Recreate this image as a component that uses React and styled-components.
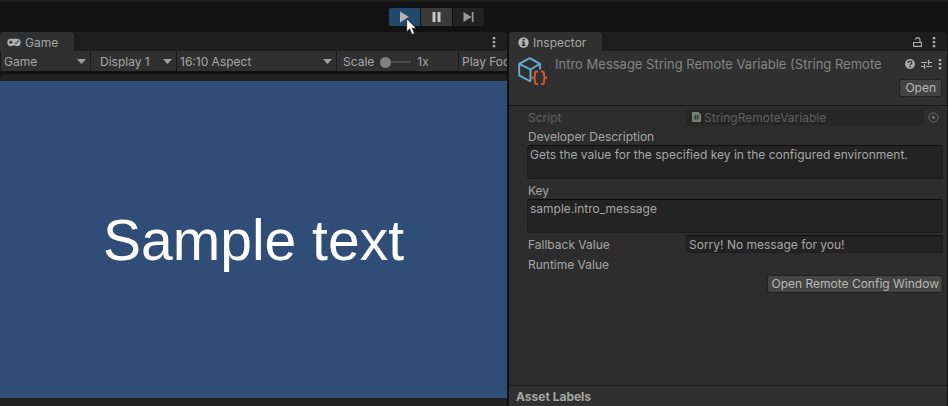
import React from "react";
import styled, { createGlobalStyle } from "styled-components";

const GlobalStyle = createGlobalStyle`
  *, *::before, *::after { box-sizing: border-box; }
  html, body, #root { height: 100%; }
  body {
    margin: 0;
    background: #121212;
    color: #a6a6a6;
    font-family: Inter, "Liberation Sans", sans-serif;
    font-size: 12px;
    line-height: 16px;
    overflow: hidden;
  }
  button, input, select, textarea { font: inherit; color: inherit; margin: 0; }
  h1, h2, p { margin: 0; font: inherit; }
  svg { display: block; flex: none; }
`;

const Editor = styled.div`
  display: flex;
  flex-direction: column;
  height: 100vh;
`;

const PlayBar = styled.header`
  display: flex;
  justify-content: center;
  align-items: center;
  height: 32px;
  flex: none;
  padding: 0 76px 0 0;
  border-top: 2px solid #1c1c1c;
`;

const PlayControls = styled.div`
  position: relative;
  display: flex;
  gap: 1px;
`;

const PlayButton = styled.button`
  display: grid;
  place-items: center;
  width: 31px;
  height: 18px;
  padding: 0;
  border: 0;
  background: ${(p) => p.$bg};
  color: ${(p) => p.$fg || "#b4b4b4"};
  &:first-child { border-radius: 2px 0 0 2px; }
  &:nth-child(3) { border-radius: 0 2px 2px 0; }
`;

const Pointer = styled.svg`
  position: absolute;
  left: 17px;
  top: 10px;
  pointer-events: none;
`;

const Panels = styled.main`
  flex: 1;
  min-height: 0;
  display: grid;
  grid-template-columns: minmax(0, 507fr) minmax(0, 438fr);
  gap: 2px;
  padding-right: 1px;
`;

const Panel = styled.section`
  display: flex;
  flex-direction: column;
  min-width: 0;
  overflow: hidden;
`;

const TabStrip = styled.div`
  display: flex;
  align-items: center;
  height: 19px;
  flex: none;
  gap: 10px;
  padding-right: 11px;
  background: #1e1e1e;
  border-radius: 3px 3px 0 0;
`;

const Tab = styled.h2`
  display: flex;
  align-items: center;
  gap: 4px;
  height: 19px;
  padding: 2px 16px 0 ${(p) => p.$start};
  margin-right: auto;
  border-radius: 3px 3px 0 0;
  background: #303030;
`;

const IconButton = styled.button`
  display: grid;
  place-items: center;
  padding: 0;
  border: 0;
  background: none;
`;

const Toolbar = styled.div`
  display: flex;
  height: 20px;
  flex: none;
  background: #303030;
  border-left: 1px solid #1a1a1a;
  overflow: hidden;
  white-space: nowrap;
`;

const DropDown = styled.label`
  position: relative;
  display: flex;
  align-items: center;
  flex: 0 0 ${(p) => p.$width};
  border-right: 1px solid #1a1a1a;
  select {
    appearance: none;
    width: 100%;
    height: 20px;
    padding: 2px 16px 0 ${(p) => p.$start || "3px"};
    border: 0;
    background: none;
  }
  svg {
    position: absolute;
    right: 4px;
    pointer-events: none;
  }
`;

const ScaleGroup = styled.label`
  display: flex;
  align-items: center;
  flex: 0 0 122px;
  gap: 6px;
  padding: 2px 0 0 6px;
  border-right: 1px solid #1a1a1a;
`;

const Slider = styled.input.attrs({ type: "range" })`
  appearance: none;
  width: 31px;
  height: 12px;
  background: linear-gradient(#4c4c4c, #4c4c4c) center / 100% 2px no-repeat;
  &::-webkit-slider-thumb {
    appearance: none;
    width: 11px;
    height: 11px;
    border-radius: 50%;
    background: #808080;
  }
`;

const ToolbarButton = styled.button`
  flex: none;
  padding: 2px 3px 0;
  border: 0;
  background: none;
`;

const GameFrame = styled.div`
  flex: 1;
  min-height: 0;
  display: flex;
  flex-direction: column;
  margin-top: 3px;
  padding: 7px 0 8px;
  background: #212121;
  border-radius: 4px 4px 0 0;
`;

const GameView = styled.div`
  flex: 1;
  display: grid;
  place-items: center;
  background: #304d78;
  color: #fff;
  font: 57px/68px "Liberation Sans", Arial, sans-serif;
`;

const AssetHeader = styled.div`
  display: grid;
  grid-template-columns: 30px minmax(0, 1fr) auto;
  gap: 6px 8px;
  align-content: start;
  height: 55px;
  flex: none;
  padding: 4px 5px 0 8px;
  background: #303030;
  border-bottom: 1px solid #171717;
  > svg { grid-row: span 2; }
`;

const AssetTitle = styled.h1`
  font-size: 13px;
  line-height: 18px;
  color: #858585;
  white-space: nowrap;
  overflow: hidden;
`;

const HeaderActions = styled.div`
  display: flex;
  gap: 6px;
  height: 18px;
  align-items: center;
`;

const Button = styled.button`
  height: 18px;
  padding: 0 ${(p) => p.$pad || "5px"};
  border: 1px solid #202020;
  border-radius: 3px;
  background: #444;
  color: #b8b8b8;
  line-height: 16px;
  white-space: nowrap;
`;

const OpenButton = styled(Button)`
  grid-column: 2 / -1;
  justify-self: end;
`;

const Fields = styled.form`
  flex: 1;
  display: flex;
  flex-direction: column;
  gap: 2px;
  min-height: 0;
  padding: 2px 4px 0 18px;
  background: #2d2d2d;
`;

const Row = styled.div`
  display: grid;
  grid-template-columns: minmax(0, 159fr) minmax(0, 257fr);
  align-items: center;
  height: 18px;
  flex: none;
  color: ${(p) => (p.$disabled ? "#606060" : "inherit")};
`;

const Label = styled.label`
  padding: 1px 0 0 1px;
`;

const Block = styled.div`
  display: flex;
  flex-direction: column;
  flex: none;
  padding-top: ${(p) => p.$top || "0"};
`;

const TextField = styled.input`
  width: 100%;
  height: 18px;
  padding: 1px 2px 0;
  border: 1px solid #1d1d1d;
  border-top-color: #0d0d0d;
  border-radius: 3px;
  background: #232323;
`;

const TextArea = styled.textarea`
  display: block;
  width: 100%;
  height: 34px;
  padding: 1px 2px;
  border: 1px solid #1d1d1d;
  border-top-color: #0d0d0d;
  border-radius: 3px;
  background: #232323;
  resize: none;
  overflow: hidden;
`;

const ObjectField = styled.div`
  display: flex;
  align-items: center;
  gap: 3px;
  height: 18px;
  padding-left: 5px;
  border: 1px solid #292929;
  border-radius: 3px;
  background: #262626;
  input {
    flex: 1;
    min-width: 0;
    height: 16px;
    padding: 1px 0 0;
    border: 0;
    background: none;
  }
  button {
    width: 18px;
    height: 16px;
    background: #2d2d2d;
  }
`;

const ConfigButton = styled(Button)`
  align-self: flex-end;
  flex: none;
`;

const AssetLabels = styled.footer`
  height: 21px;
  flex: none;
  padding: 3px 7px 0;
  border-top: 1px solid #1b1b1b;
  background: #303030;
  font-weight: 700;
`;

const Chevron = () => (
  <svg width="9" height="5" viewBox="0 0 9 5" aria-hidden="true">
    <path d="M0 0h9L4.500 5z" fill="#a0a0a0" />
  </svg>
);

const MoreIcon = () => (
  <svg width="4" height="12" viewBox="0 0 4 12" fill="#adadad" aria-hidden="true">
    <path d="M.75 1h2.500v2.300H.75zM.75 5h2.500v2.300H.75zM.75 9h2.500v2.300H.75z" />
  </svg>
);

const GamepadIcon = () => (
  <svg width="14" height="9" viewBox="0 0 14 9" aria-hidden="true">
    <path d="M4 .8h6a3.700 3.700 0 0 1 0 7.400c-1.200 0-1.800-.9-3-.9s-1.800.9-3 .9A3.700 3.700 0 0 1 4 .8z" fill="#b0b0b0" />
    <path d="M3.800 2.500v3.600M2 4.300h3.600" stroke="#303030" strokeWidth="1.200" />
    <circle cx="9" cy="5.200" r=".9" fill="#303030" />
    <circle cx="11" cy="3.400" r=".9" fill="#303030" />
  </svg>
);

const InfoIcon = () => (
  <svg width="11" height="11" viewBox="0 0 11 11" aria-hidden="true">
    <circle cx="5.500" cy="5.500" r="5.200" fill="#b4b4b4" />
    <path d="M4.600 1.700h2v1.700h-2zM4 4.400h2.600v3.400h.8V9H3.800V7.800h.9V5.500H4z" fill="#303030" />
  </svg>
);

const LockIcon = () => (
  <svg width="9" height="10" viewBox="0 0 9 10" fill="none" stroke="#b0b0b0" strokeWidth="1.100" aria-hidden="true">
    <path d="M.6 5.500h7.800v3.900H.6zM7 5.500V2.500L6 .9H3.300L2.200 2.500" />
  </svg>
);

const HelpIcon = () => (
  <svg width="10" height="10" viewBox="0 0 10 10" aria-hidden="true">
    <circle cx="5" cy="5" r="5" fill="#aaa" />
    <path d="M3.300 3.900c0-2.300 3.600-2.200 3.500 0 0 1.200-1.700 1-1.700 2.300M5.100 7v1.300" fill="none" stroke="#303030" strokeWidth="1.300" />
  </svg>
);

const PresetIcon = () => (
  <svg width="11" height="11" viewBox="0 0 11 11" fill="none" stroke="#b4b4b4" strokeWidth="1.200" aria-hidden="true">
    <path d="M0 3.500h6M7.500 1v5M7.500 3.500H11M0 7.500h3M3.500 5v5M5 7.500h6" />
  </svg>
);

const CubeIcon = () => (
  <svg width="30" height="30" viewBox="0 0 30 30" fill="none" aria-hidden="true">
    <path
      d="M13.500 26.500v-12L2.200 8.800 12.800 3.200l10.200 5.600-9.500 5.700M2.200 8.800v11.600l11.300 6.100M23 8.800v5.700"
      stroke="#67aed4"
      strokeWidth="1.900"
      strokeLinejoin="round"
    />
    <path
      d="M21 16.500h-1.200c-1.300 0-1.800.7-1.800 1.900v2.200c0 1.300-.6 1.900-2 1.900v.6c1.400 0 2 .6 2 1.900v2.300c0 1.200.5 1.900 1.800 1.900H21M24 16.500h1.200c1.300 0 1.800.7 1.800 1.900v2.200c0 1.300.6 1.900 2 1.900v.6c-1.400 0-2 .6-2 1.900v2.300c0 1.200-.5 1.900-1.800 1.900H24"
      stroke="#d9532c"
      strokeWidth="1.900"
    />
  </svg>
);

const ScriptIcon = () => (
  <svg width="9" height="10" viewBox="0 0 9 10" aria-hidden="true">
    <path d="M0 0h6.500L9 2.500V10H0z" fill="#7b7f7c" />
    <path d="M3.700 2.500l-.7 5.500M6 2.500l-.7 5.500M1.800 4.200h5.500M1.600 6.300h5.500" stroke="#2c4032" strokeWidth=".9" />
  </svg>
);

const TargetIcon = () => (
  <svg width="11" height="11" viewBox="0 0 11 11" aria-hidden="true">
    <circle cx="5.500" cy="5.500" r="4.600" fill="none" stroke="#6b6b6b" />
    <circle cx="5.500" cy="5.500" r="1.500" fill="#777" />
  </svg>
);

const PlayIcon = () => (
  <svg width="10" height="12" viewBox="0 0 10 12" aria-hidden="true">
    <path d="M1 .5l8.800 5.500L1 11.500z" fill="currentColor" />
  </svg>
);

const PauseIcon = () => (
  <svg width="9" height="10" viewBox="0 0 9 10" aria-hidden="true">
    <path d="M.5 0h3v10h-3zM5.500 0h3v10h-3z" fill="currentColor" />
  </svg>
);

const StepIcon = () => (
  <svg width="11" height="10" viewBox="0 0 11 10" aria-hidden="true">
    <path d="M.5 0l8 5-8 5zM8.800 0h1.700v10H8.800z" fill="currentColor" />
  </svg>
);

export default function App() {
  return (
    <>
      <GlobalStyle />
      <Editor>
        <PlayBar>
          <PlayControls>
            <PlayButton $bg="#23486d" aria-label="Play"><PlayIcon /></PlayButton>
            <PlayButton $bg="#3a3a3a" $fg="#c8c8c8" aria-label="Pause"><PauseIcon /></PlayButton>
            <PlayButton $bg="#222" $fg="#9a9a9a" aria-label="Step"><StepIcon /></PlayButton>
            <Pointer width="11" height="18" viewBox="0 0 11 18" aria-hidden="true">
              <path d="M.7.8v13l3-2.800 2.200 5.500 2.600-1.100-2.300-5.200h4z" fill="#fff" stroke="#222" strokeWidth=".8" />
            </Pointer>
          </PlayControls>
        </PlayBar>
        <Panels>
          <Panel>
            <TabStrip>
              <Tab $start="7px"><GamepadIcon />Game</Tab>
              <IconButton aria-label="Game options"><MoreIcon /></IconButton>
            </TabStrip>
            <Toolbar>
              <DropDown $width="90px">
                <select aria-label="View"><option>Game</option></select>
                <Chevron />
              </DropDown>
              <DropDown $width="86px" $start="9px">
                <select aria-label="Display"><option>Display 1</option></select>
                <Chevron />
              </DropDown>
              <DropDown $width="160px">
                <select aria-label="Aspect"><option>16:10 Aspect</option></select>
                <Chevron />
              </DropDown>
              <ScaleGroup>
                Scale
                <Slider min="1" max="5" defaultValue="1" />
                <span>1x</span>
              </ScaleGroup>
              <ToolbarButton>Play Focused</ToolbarButton>
            </Toolbar>
            <GameFrame>
              <GameView>Sample text</GameView>
            </GameFrame>
          </Panel>
          <Panel>
            <TabStrip>
              <Tab $start="9px"><InfoIcon />Inspector</Tab>
              <IconButton aria-label="Lock"><LockIcon /></IconButton>
              <IconButton aria-label="Inspector options"><MoreIcon /></IconButton>
            </TabStrip>
            <AssetHeader>
              <CubeIcon />
              <AssetTitle>Intro Message String Remote Variable (String Remote</AssetTitle>
              <HeaderActions>
                <IconButton aria-label="Help"><HelpIcon /></IconButton>
                <IconButton aria-label="Presets"><PresetIcon /></IconButton>
                <IconButton aria-label="Asset options"><MoreIcon /></IconButton>
              </HeaderActions>
              <OpenButton>Open</OpenButton>
            </AssetHeader>
            <Fields onSubmit={(e) => e.preventDefault()}>
              <Row $disabled>
                <Label htmlFor="script">Script</Label>
                <ObjectField>
                  <ScriptIcon />
                  <input id="script" readOnly defaultValue="StringRemoteVariable" />
                  <IconButton type="button" aria-label="Select script"><TargetIcon /></IconButton>
                </ObjectField>
              </Row>
              <Block>
                <Label htmlFor="description">Developer Description</Label>
                <TextArea id="description" defaultValue="Gets the value for the specified key in the configured environment." />
              </Block>
              <Block $top="1px">
                <Label htmlFor="key">Key</Label>
                <TextArea id="key" defaultValue="sample.intro_message" />
              </Block>
              <Row>
                <Label htmlFor="fallback">Fallback Value</Label>
                <TextField id="fallback" defaultValue="Sorry! No message for you!" />
              </Row>
              <Row><Label as="span">Runtime Value</Label></Row>
              <ConfigButton type="button" $pad="3px">Open Remote Config Window</ConfigButton>
            </Fields>
            <AssetLabels>Asset Labels</AssetLabels>
          </Panel>
        </Panels>
      </Editor>
    </>
  );
}
